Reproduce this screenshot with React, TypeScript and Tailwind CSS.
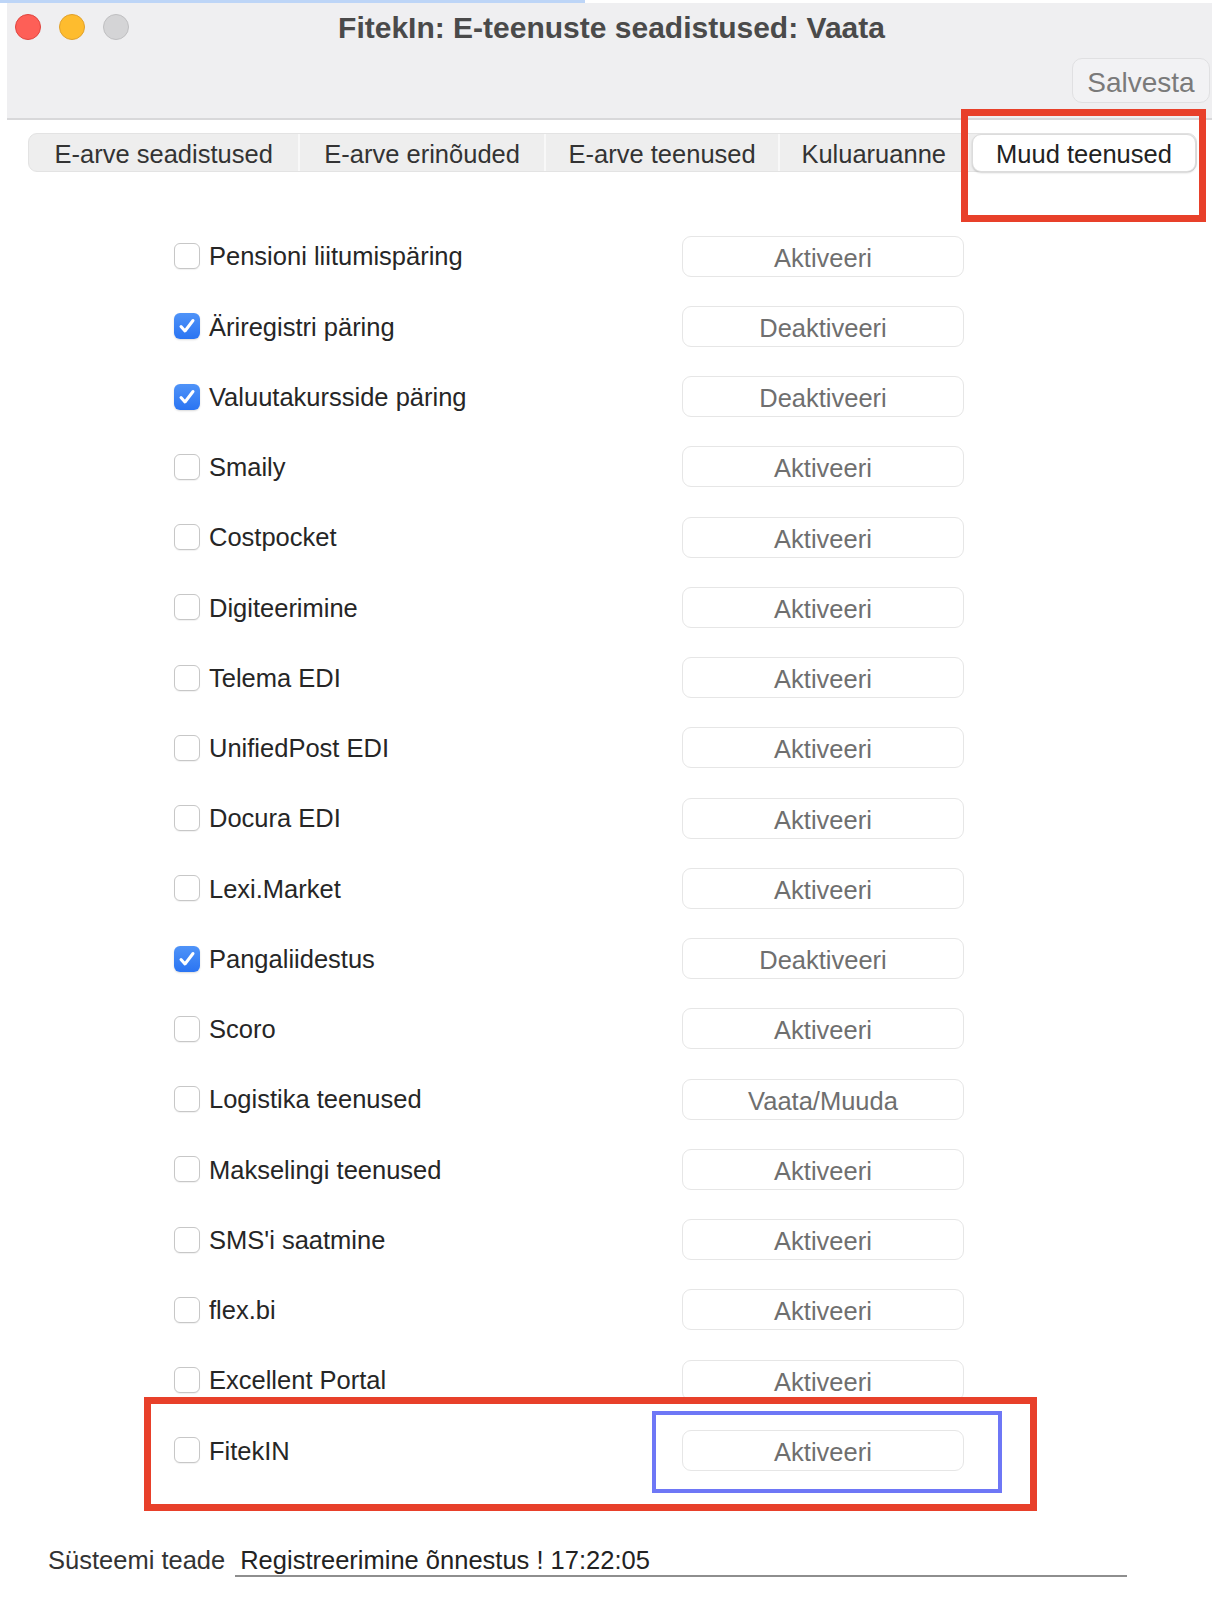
const SERVICES: { name: string; on: boolean; action: string }[] = [
  { name: "Pensioni liitumispäring", on: false, action: "Aktiveeri" },
  { name: "Äriregistri päring", on: true, action: "Deaktiveeri" },
  { name: "Valuutakursside päring", on: true, action: "Deaktiveeri" },
  { name: "Smaily", on: false, action: "Aktiveeri" },
  { name: "Costpocket", on: false, action: "Aktiveeri" },
  { name: "Digiteerimine", on: false, action: "Aktiveeri" },
  { name: "Telema EDI", on: false, action: "Aktiveeri" },
  { name: "UnifiedPost EDI", on: false, action: "Aktiveeri" },
  { name: "Docura EDI", on: false, action: "Aktiveeri" },
  { name: "Lexi.Market", on: false, action: "Aktiveeri" },
  { name: "Pangaliidestus", on: true, action: "Deaktiveeri" },
  { name: "Scoro", on: false, action: "Aktiveeri" },
  { name: "Logistika teenused", on: false, action: "Vaata/Muuda" },
  { name: "Makselingi teenused", on: false, action: "Aktiveeri" },
  { name: "SMS'i saatmine", on: false, action: "Aktiveeri" },
  { name: "flex.bi", on: false, action: "Aktiveeri" },
  { name: "Excellent Portal", on: false, action: "Aktiveeri" },
  { name: "FitekIN", on: false, action: "Aktiveeri" },
];

const TABS = [
  { label: "E-arve seadistused", w: "w-[270px]" },
  { label: "E-arve erinõuded", w: "w-[246px]" },
  { label: "E-arve teenused", w: "w-[235px]" },
  { label: "Kuluaruanne", w: "w-[189px]" },
];

function Checkbox({ checked }: { checked: boolean }) {
  if (checked) {
    return (
      <span className="flex h-[26px] w-[26px] shrink-0 items-center justify-center rounded-[6px] bg-gradient-to-b from-[#4f93f8] to-[#2a74f2] shadow-[0_1px_2px_rgba(0,0,0,0.15)]">
        <svg width="20" height="20" viewBox="0 0 20 20" fill="none">
          <path d="M4 10.5 L8 15 L16 4.5" stroke="white" strokeWidth="3" strokeLinecap="round" strokeLinejoin="round" />
        </svg>
      </span>
    );
  }
  return (
    <span className="h-[26px] w-[26px] shrink-0 rounded-[6px] border border-[#c7c7c7] bg-white shadow-[0_1px_1px_rgba(0,0,0,0.06)]" />
  );
}

export default function App() {
  return (
    <div className="relative h-[1614px] w-[1212px] overflow-hidden bg-white font-['Liberation_Sans',Arial,sans-serif] text-[25.5px] text-[#262626]">
      <div className="h-[3px] w-[585px] bg-[#bdd5f7]" />

      {/* title bar */}
      <div className="ml-[7px] h-[117px] border-b-2 border-[#d8d8da] bg-[#efeff1]">
        <div className="grid h-[48px] grid-cols-[1fr_auto_1fr] items-center">
          <div className="flex items-center gap-[18px] pl-[8px]">
            <span className="h-[26px] w-[26px] rounded-full border border-[#e0443e] bg-[#fe5f57]" />
            <span className="h-[26px] w-[26px] rounded-full border border-[#e1a02a] bg-[#febc2e]" />
            <span className="h-[26px] w-[26px] rounded-full border border-[#bfbfc1] bg-[#d4d4d6]" />
          </div>
          <div className="pl-[4px] text-[30px] font-bold text-[#4a4a4a]">FitekIn: E-teenuste seadistused: Vaata</div>
          <div />
        </div>
        <div className="mt-[7px] flex justify-end pr-[2px]">
          <button className="h-[45px] w-[138px] rounded-[10px] border border-[#e0e0e2] bg-[#f2f2f4] pt-[3px] text-[28px] text-[#7a7a7a]">
            Salvesta
          </button>
        </div>
      </div>

      {/* tabs */}
      <div className="ml-[28px] mt-[13px] flex h-[39px] w-[1169px] rounded-[9px] border border-[#e3e3e3] bg-[#eeeeee] text-[#333]">
        {TABS.map((t, i) => (
          <div
            key={t.label}
            className={`flex items-center justify-center pt-[4px] ${t.w} ${i > 0 ? "border-l-2 border-[#f8f8f8]" : ""}`}
          >
            {t.label}
          </div>
        ))}
        <div className="flex w-[229px] items-center border-l-2 border-[#f8f8f8] pl-[3px]">
          <div className="flex h-[38px] w-[224px] items-center justify-center rounded-[9px] border border-[#dcdcdc] bg-white pt-[4px] text-[#222] shadow-[0_1px_2px_rgba(0,0,0,0.18)]">
            Muud teenused
          </div>
        </div>
      </div>

      {/* services */}
      <div className="mt-[49px]">
        {SERVICES.map((s) => (
          <div key={s.name} className="flex h-[70.25px] items-center pl-[174px]">
            <Checkbox checked={s.on} />
            <span className="ml-[9px] w-[473px] pt-[2px] leading-none">{s.name}</span>
            <button className="h-[41px] w-[282px] rounded-[9px] border border-[#e6e6e6] bg-white pt-[2px] text-[#6f6f6f]">
              {s.action}
            </button>
          </div>
        ))}
      </div>

      {/* status line */}
      <div className="mt-[59px] flex items-end pl-[48px]">
        <span className="h-[32px] leading-[30px] text-[#333]">Süsteemi teade</span>
        <div className="ml-[10px] h-[32px] w-[892px] border-b-2 border-[#8e8e8e] pl-[5px] leading-[30px] text-[#222]">
          Registreerimine õnnestus ! 17:22:05
        </div>
      </div>

      {/* annotation frames */}
      <div className="absolute left-[961px] top-[109px] h-[113px] w-[245px] border-[7px] border-[#e8402a]" />
      <div className="absolute left-[144px] top-[1397px] h-[114px] w-[893px] border-[7px] border-[#e8402a]" />
      <div className="absolute left-[652px] top-[1411px] h-[82px] w-[350px] border-[4px] border-[#6e77f6]" />
    </div>
  );
}
